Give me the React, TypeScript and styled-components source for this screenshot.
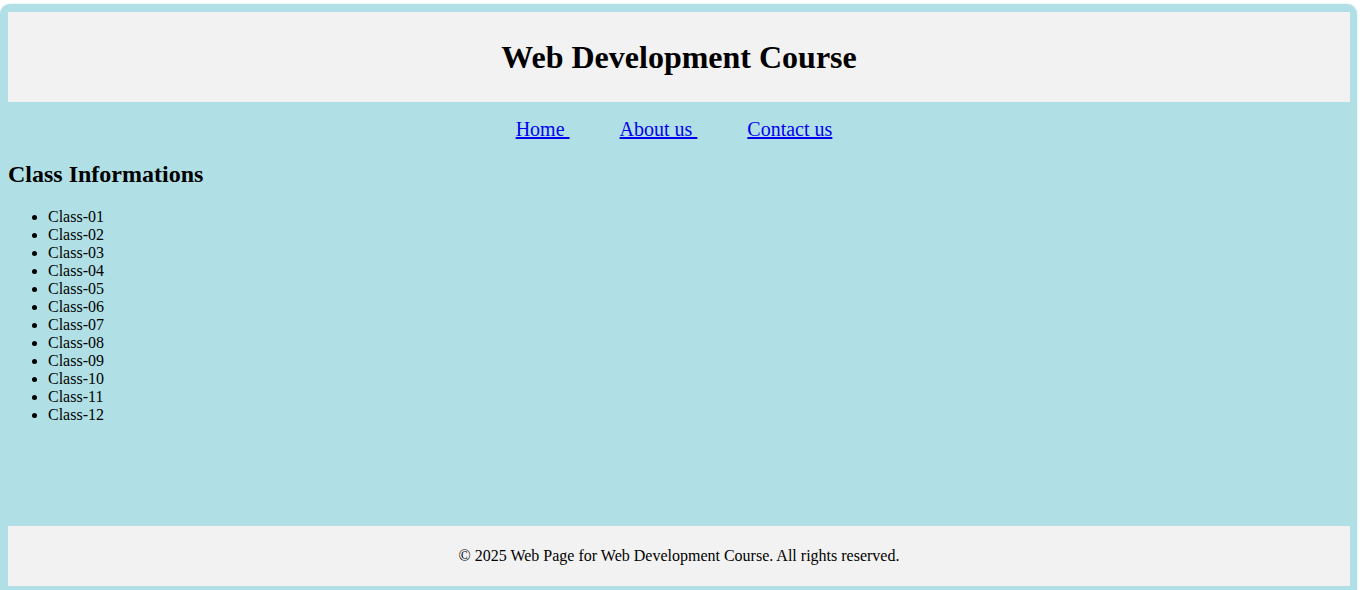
import React from "react";
import styled, { createGlobalStyle } from "styled-components";

const GlobalStyle = createGlobalStyle`
  html, body {
    margin: 0;
    padding: 0;
    background: #ffffff;
    font-family: "Liberation Serif", "Times New Roman", serif;
    color: #000;
    overflow: hidden;
  }
`;

const Page = styled.div`
  margin: 4px 3px 0 0;
  padding: 8px 7px 8px 8px;
  background: #b0e0e6;
  border-radius: 10px 10px 0 0;
  box-shadow: 0 0 2px rgba(176, 224, 230, 0.8);
`;

const Header = styled.header`
  background: #f2f2f2;
  padding: 26px 0;
  text-align: center;
`;

const Title = styled.h1`
  margin: 0;
  font-size: 32px;
  line-height: 38px;
  font-weight: bold;
`;

const Nav = styled.nav`
  display: flex;
  justify-content: center;
  gap: 50px;
  padding: 16px 10px 0 0;
  font-size: 20px;
  line-height: 23px;
`;

const NavLink = styled.a`
  color: #0000ee;
  text-decoration: underline;
  white-space: pre;
  cursor: pointer;
`;

const Content = styled.section`
  box-sizing: border-box;
  min-height: 385px;
  padding-top: 19px;
`;

const Heading = styled.h2`
  margin: 0 0 20px;
  font-size: 24px;
  line-height: 28px;
  font-weight: bold;
`;

const ClassList = styled.ul`
  margin: 0;
  padding-left: 40px;
  font-size: 16px;
  line-height: 18px;
`;

const Footer = styled.footer`
  background: #f2f2f2;
  padding: 21px 0;
  text-align: center;
  font-size: 16px;
  line-height: 18px;
`;

const classes = Array.from({ length: 12 }, (_, i) => `Class-${String(i + 1).padStart(2, "0")}`);

export default function App() {
  return (
    <>
      <GlobalStyle />
      <Page>
        <Header>
          <Title>Web Development Course</Title>
        </Header>
        <Nav>
          <NavLink>{"Home "}</NavLink>
          <NavLink>{"About us "}</NavLink>
          <NavLink>Contact us</NavLink>
        </Nav>
        <Content>
          <Heading>Class Informations</Heading>
          <ClassList>
            {classes.map((c) => (
              <li key={c}>{c}</li>
            ))}
          </ClassList>
        </Content>
        <Footer>© 2025 Web Page for Web Development Course. All rights reserved.</Footer>
      </Page>
    </>
  );
}
